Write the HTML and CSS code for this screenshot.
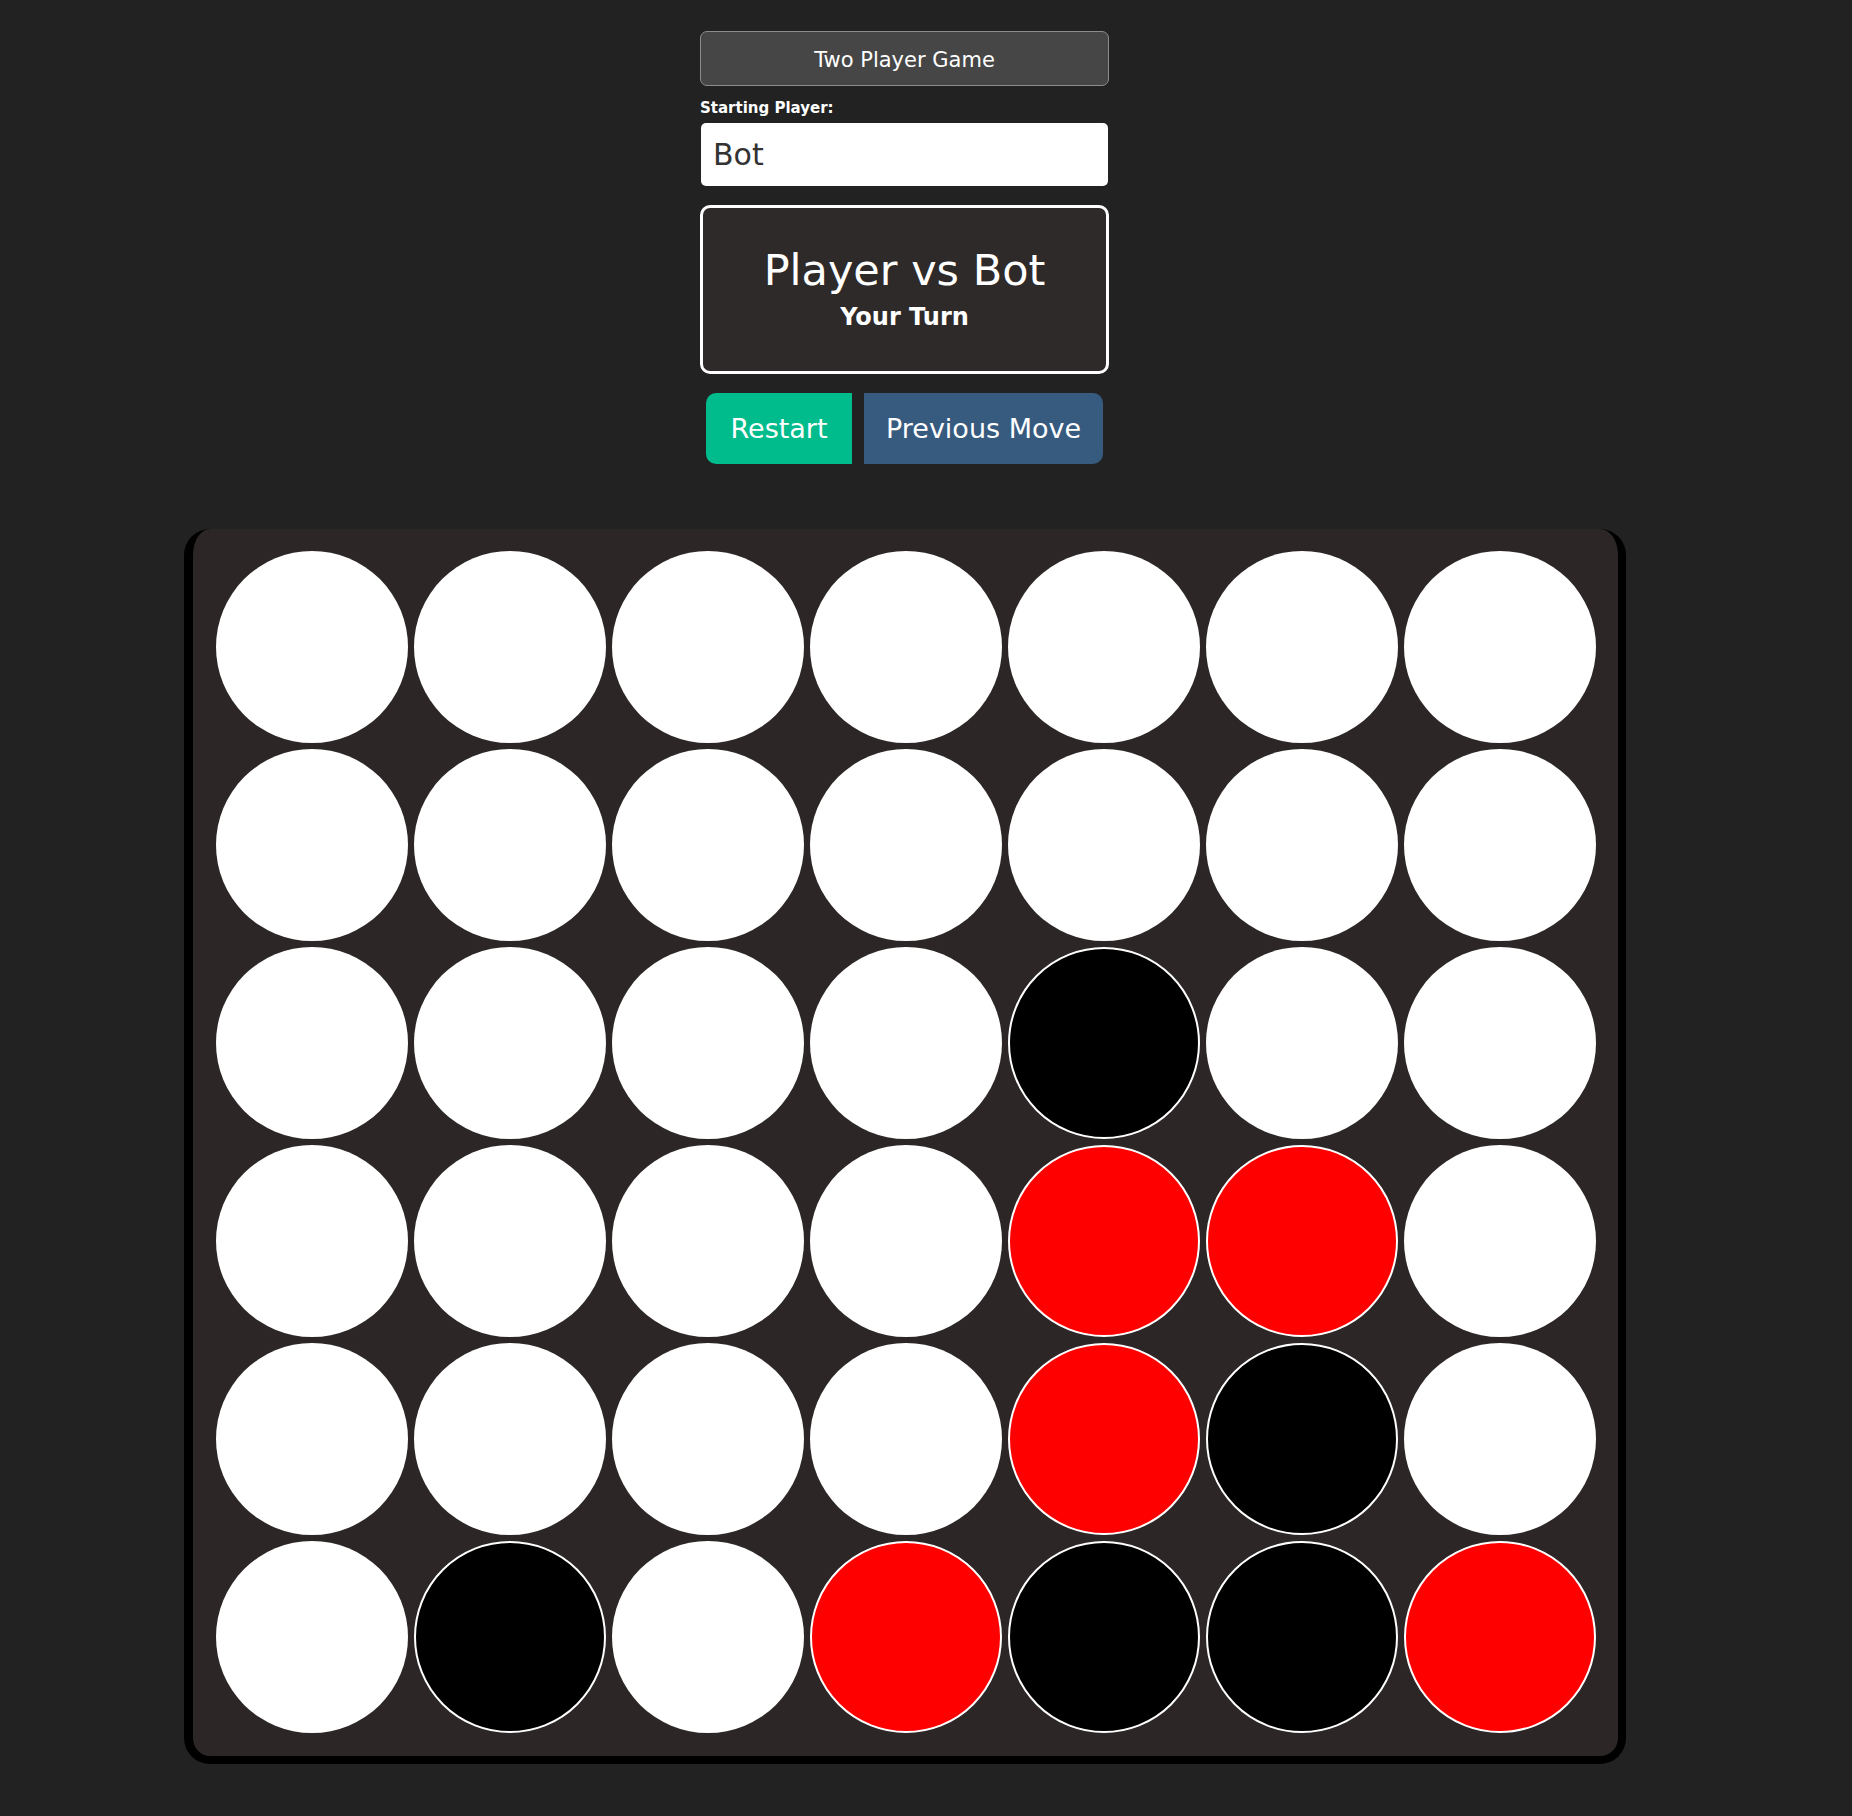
FILE: index.html
```html
<!DOCTYPE html>
<html>
<head>
<meta charset="utf-8">
<link rel="stylesheet" href="styles.css">
</head>
<body>
<div class="page">
  <div class="controls">
    <button class="mode-btn">Two Player Game</button>
    <div class="label">Starting Player:</div>
    <div class="select">Bot</div>
    <div class="status">
      <div class="status-title">Player vs Bot</div>
      <div class="status-sub">Your Turn</div>
    </div>
    <div class="actions">
      <button class="btn btn-restart">Restart</button>
      <button class="btn btn-prev">Previous Move</button>
    </div>
  </div>
  <div class="board">
    <div class="cell"></div><div class="cell"></div><div class="cell"></div><div class="cell"></div><div class="cell"></div><div class="cell"></div><div class="cell"></div>
    <div class="cell"></div><div class="cell"></div><div class="cell"></div><div class="cell"></div><div class="cell"></div><div class="cell"></div><div class="cell"></div>
    <div class="cell"></div><div class="cell"></div><div class="cell"></div><div class="cell"></div><div class="cell black"></div><div class="cell"></div><div class="cell"></div>
    <div class="cell"></div><div class="cell"></div><div class="cell"></div><div class="cell"></div><div class="cell red"></div><div class="cell red"></div><div class="cell"></div>
    <div class="cell"></div><div class="cell"></div><div class="cell"></div><div class="cell"></div><div class="cell red"></div><div class="cell black"></div><div class="cell"></div>
    <div class="cell"></div><div class="cell black"></div><div class="cell"></div><div class="cell red"></div><div class="cell black"></div><div class="cell black"></div><div class="cell red"></div>
  </div>
</div>
</body>
</html>
```

FILE: styles.css
```css
html, body {
  margin: 0;
  background: #222222;
}
body {
  font-family: "DejaVu Sans", "Liberation Sans", sans-serif;
  color: #fff;
}
.page {
  width: 1809px;
  padding-top: 31px;
  display: flex;
  flex-direction: column;
  align-items: center;
}
.controls {
  width: 409px;
  display: flex;
  flex-direction: column;
}
.mode-btn {
  height: 55px;
  box-sizing: border-box;
  border: 1px solid #8c8c8c;
  background: #464646;
  border-radius: 7px;
  color: #fff;
  font-family: inherit;
  font-size: 21px;
  padding: 2px 0 0 0;
}
.label {
  margin-top: 11px;
  font-size: 15px;
  font-weight: bold;
  line-height: 22px;
}
.select {
  margin: 4px 1px 0 1px;
  height: 63px;
  box-sizing: border-box;
  background: #fff;
  border-radius: 5px;
  color: #333;
  font-size: 30px;
  line-height: 63px;
  padding-left: 12px;
}
.status {
  margin-top: 19px;
  height: 169px;
  box-sizing: border-box;
  border: 3px solid #fff;
  border-radius: 10px;
  background: #2e2a29;
  display: flex;
  flex-direction: column;
  align-items: center;
  justify-content: center;
  padding-bottom: 4px;
}
.status-title {
  font-size: 43px;
  line-height: 52px;
}
.status-sub {
  margin-top: 7px;
  font-size: 24px;
  font-weight: bold;
  line-height: 28px;
}
.actions {
  margin-top: 19px;
  display: flex;
  justify-content: center;
  gap: 12px;
}
.btn {
  height: 71px;
  border: none;
  color: #fff;
  font-family: inherit;
  font-size: 27px;
  padding: 0;
}
.btn-restart {
  width: 146px;
  background: #00bc8c;
  border-radius: 10px 0 0 10px;
}
.btn-prev {
  width: 239px;
  background: #375a7f;
  border-radius: 0 10px 10px 0;
}
.board {
  margin-top: 65px;
  background: #2c2626;
  border: 8px solid #000;
  border-left-width: 9px;
  border-top: none;
  border-radius: 26px;
  padding: 22px 22px 23px 23px;
  display: grid;
  grid-template-columns: repeat(7, 192px);
  grid-auto-rows: 192px;
  gap: 6px;
}
.cell {
  border-radius: 50%;
  background: #fff;
}
.cell.black {
  background: #000;
  border: 2px solid #fff;
}
.cell.red {
  background: #ff0000;
  border: 2px solid #fff;
}
```
